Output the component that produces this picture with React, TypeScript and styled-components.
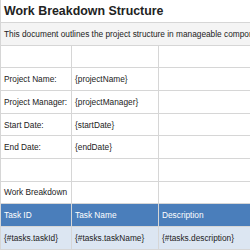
import React from "react";
import styled, { createGlobalStyle } from "styled-components";

const GlobalStyle = createGlobalStyle`
  html, body {
    margin: 0;
    padding: 0;
    background: #ffffff;
    overflow: hidden;
  }
  body {
    font-family: "Liberation Sans", Arial, sans-serif;
  }
`;

const Sheet = styled.table`
  border-collapse: collapse;
  table-layout: fixed;
  width: 330px;
  font-size: 8.3px;
  color: #222;
`;

const Row = styled.tr<{ $tone?: "plain" | "note" | "head" | "task" }>`
  height: 22.65px;
  background: ${(p) =>
    p.$tone === "note"
      ? "#f4f4f4"
      : p.$tone === "head"
      ? "#4a7ebb"
      : p.$tone === "task"
      ? "#dce6f2"
      : "#ffffff"};
  color: ${(p) => (p.$tone === "head" ? "#ffffff" : "#222")};
`;

const Cell = styled.td`
  border: 1px solid #d6d6d6;
  padding: 0 3px;
  white-space: nowrap;
  overflow: hidden;
  vertical-align: middle;
`;

const HeadCell = styled.th`
  border: 1px solid #d6d6d6;
  padding: 0 3px;
  text-align: left;
  font-weight: normal;
  white-space: nowrap;
  overflow: hidden;
`;

const TitleCell = styled.td`
  border: 1px solid #d6d6d6;
  border-top: none;
  padding: 0 3px;
  font-size: 12.4px;
  font-weight: bold;
  color: #222;
  white-space: nowrap;
`;

const NoteCell = styled.td`
  border: 1px solid #d6d6d6;
  padding: 0 3px;
  white-space: nowrap;
  overflow: hidden;
`;

const fields = [
  ["Project Name:", "{projectName}"],
  ["Project Manager:", "{projectManager}"],
  ["Start Date:", "{startDate}"],
  ["End Date:", "{endDate}"],
];

export default function App() {
  return (
    <>
      <GlobalStyle />
      <Sheet>
        <colgroup>
          <col style={{ width: 71 }} />
          <col style={{ width: 87 }} />
          <col style={{ width: 172 }} />
        </colgroup>
        <tbody>
          <Row>
            <TitleCell colSpan={3}>Work Breakdown Structure</TitleCell>
          </Row>
          <Row $tone="note">
            <NoteCell colSpan={3}>
              This document outlines the project structure in manageable components and tasks.
            </NoteCell>
          </Row>
          <Row>
            <Cell />
            <Cell />
            <Cell />
          </Row>
          {fields.map(([label, value]) => (
            <Row key={label}>
              <Cell>{label}</Cell>
              <Cell>{value}</Cell>
              <Cell />
            </Row>
          ))}
          <Row>
            <Cell />
            <Cell />
            <Cell />
          </Row>
          <Row>
            <Cell>Work Breakdown</Cell>
            <Cell />
            <Cell />
          </Row>
          <Row $tone="head">
            <HeadCell>Task ID</HeadCell>
            <HeadCell>Task Name</HeadCell>
            <HeadCell>Description</HeadCell>
          </Row>
          <Row $tone="task">
            <Cell>{"{#tasks.taskId}"}</Cell>
            <Cell>{"{#tasks.taskName}"}</Cell>
            <Cell>{"{#tasks.description}"}</Cell>
          </Row>
        </tbody>
      </Sheet>
    </>
  );
}
